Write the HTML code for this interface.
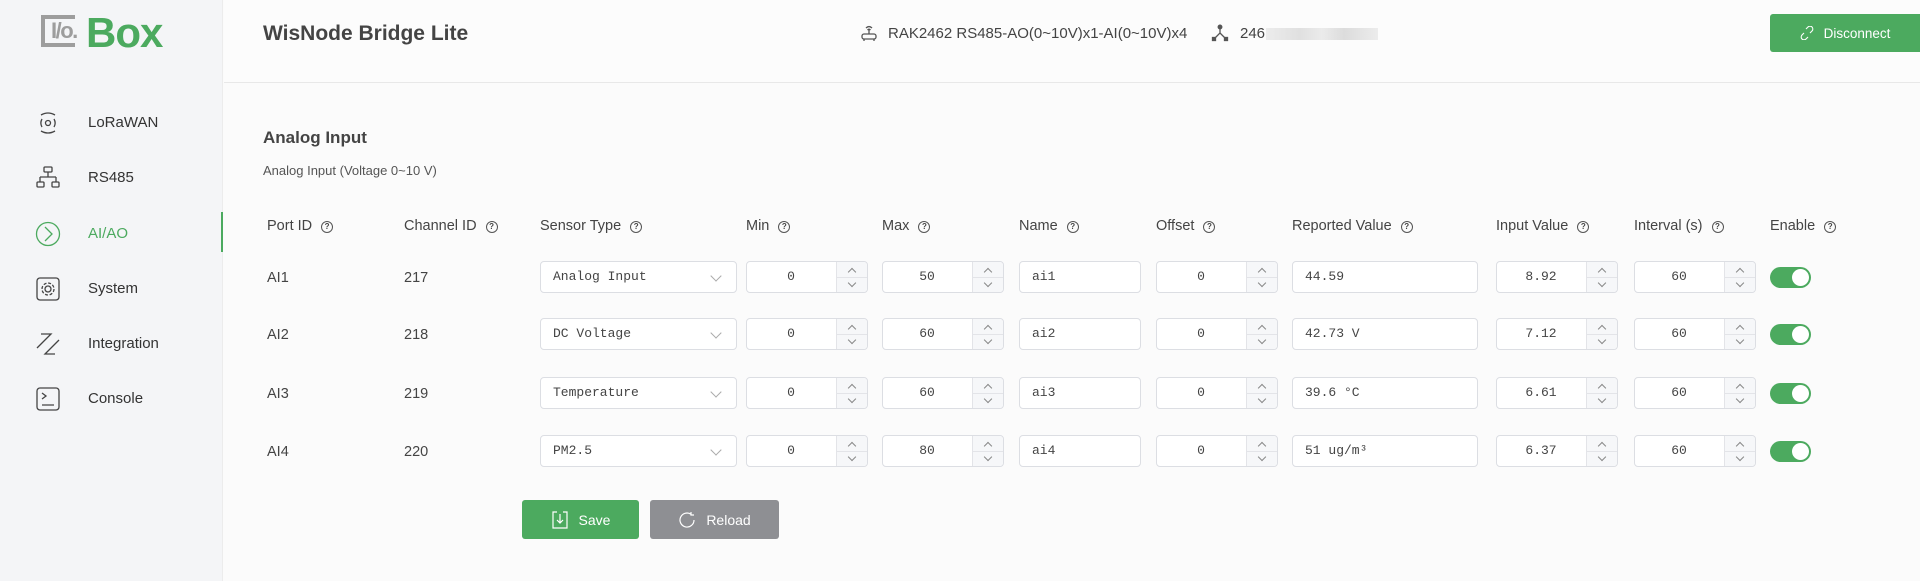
<!DOCTYPE html>
<html><head><meta charset="utf-8"><style>
*{box-sizing:border-box;margin:0;padding:0}
body{width:1920px;height:581px;overflow:hidden;background:#fbfbfb;font-family:"Liberation Sans",sans-serif;color:#333;position:relative}
.abs{position:absolute}
.side{left:0;top:0;width:223px;height:581px;background:#f4f5f7;border-right:1px solid #ececec}
.nav{position:absolute;left:0;width:223px;height:40px;display:flex;align-items:center;font-size:15px;color:#333}
.nav svg{position:absolute;left:35px;top:8px}
.nav span{position:absolute;left:88px;top:12px}
.hdr{left:224px;top:0;right:0;height:83px;background:#fcfcfc;border-bottom:1px solid #e8e8e8}
.th{position:absolute;top:218px;font-size:14.5px;color:#444;white-space:nowrap}
.q{display:inline-block;width:12px;height:12px;border:1.3px solid #555;border-radius:50%;font-size:8px;text-align:center;line-height:10px;margin-left:9px;vertical-align:1px;font-weight:bold}
.cell{position:absolute;font-size:14.5px;color:#444}
.box{position:absolute;height:32px;background:#fff;border:1px solid #dcdee3;border-radius:4px;font-family:"Liberation Mono",monospace;font-size:13px;color:#444;line-height:30px}
.num{text-align:center;padding-right:32px}
.step{position:absolute;right:0;top:0;width:31px;height:30px;border-left:1px solid #e3e4e8;background:#f6f7f9;border-radius:0 4px 4px 0}
.step:after{content:"";position:absolute;left:0;right:0;top:15px;border-top:1px solid #e3e4e8}
.step i{position:absolute;left:12px;width:6px;height:6px;border-left:1px solid #888;border-top:1px solid #888}
.sel{padding-left:12px}
.sel:after{content:"";position:absolute;right:16px;top:10px;width:7px;height:7px;border-right:1px solid #aaa;border-bottom:1px solid #aaa;transform:rotate(45deg)}
.txt{padding-left:12px}
.tg{position:absolute;left:1770px;width:41px;height:21px;border-radius:11px;background:#4caa5f}
.tg:after{content:"";position:absolute;right:2px;top:2px;width:17px;height:17px;border-radius:50%;background:#fff}
.btn{position:absolute;top:500px;height:39px;border-radius:3px;color:#fff;font-size:14px;display:flex;align-items:center;justify-content:center}
</style></head><body>
<div class="abs side"></div>
<!-- logo -->
<div class="abs" style="left:41px;top:15px;width:34px;height:32px;border:4px solid #9d9d9d;border-right:none"></div>
<div class="abs" style="left:51px;top:18px;font-size:22px;font-weight:bold;color:#9d9d9d;letter-spacing:-1.5px">I/o.</div>
<div class="abs" style="left:86px;top:9px;font-size:42px;font-weight:bold;color:#4caa5f;letter-spacing:-1px">Box</div>
<!-- nav -->
<div class="nav" style="top:102px"><svg width="26" height="26" viewBox="0 0 26 26" fill="none" stroke="#444" stroke-width="1.3"><circle cx="13" cy="13" r="2.5"/><path d="M7 9a8 8 0 0 0 0 8M19 9a8 8 0 0 1 0 8M6 5q7-4 14 0M6 21q7 4 14 0"/></svg><span>LoRaWAN</span></div>
<div class="nav" style="top:157px"><svg width="26" height="26" viewBox="0 0 26 26" fill="none" stroke="#444" stroke-width="1.3"><rect x="9" y="2" width="8" height="5" rx="1"/><path d="M13 7v5M5 12h16M5 12v5M21 12v5"/><rect x="2" y="17" width="7" height="5" rx="1"/><rect x="17" y="17" width="7" height="5" rx="1"/></svg><span>RS485</span></div>
<div class="nav" style="top:213px"><svg width="26" height="26" viewBox="0 0 26 26" fill="none" stroke="#4caa5f" stroke-width="1.3"><circle cx="13" cy="13" r="11.5"/><path d="M10 6l7 7-7 7"/></svg><span style="color:#4caa5f">AI/AO</span></div>
<div class="abs" style="left:221px;top:212px;width:2px;height:40px;background:#4caa5f"></div>
<div class="nav" style="top:268px"><svg width="26" height="26" viewBox="0 0 26 26" fill="none" stroke="#444" stroke-width="1.3"><rect x="2" y="2" width="22" height="22" rx="3"/><circle cx="13" cy="13" r="3"/><circle cx="13" cy="13" r="6" stroke-dasharray="3 1.7"/></svg><span>System</span></div>
<div class="nav" style="top:323px"><svg width="26" height="26" viewBox="0 0 26 26" fill="none" stroke="#444" stroke-width="1.3"><path d="M6 3h10L2 17M24 9L10 23h10"/></svg><span>Integration</span></div>
<div class="nav" style="top:378px"><svg width="26" height="26" viewBox="0 0 26 26" fill="none" stroke="#444" stroke-width="1.3"><rect x="2" y="2" width="22" height="22" rx="3"/><path d="M7 7l4 3-4 3M7 19h12"/></svg><span>Console</span></div>
<!-- header -->
<div class="abs hdr"></div>
<div class="abs" style="left:263px;top:22px;font-size:21px;font-weight:bold;color:#444">WisNode Bridge Lite</div>
<svg class="abs" style="left:860px;top:24px" width="18" height="18" viewBox="0 0 18 18" fill="none" stroke="#555" stroke-width="1.3"><path d="M6 4q3-3 6 0M7.5 6q1.5-1.5 3 0M9 6v4"/><rect x="2" y="10" width="14" height="5" rx="2"/><path d="M4 15v2M14 15v2"/></svg>
<div class="abs" style="left:888px;top:25px;font-size:15px;color:#444">RAK2462 RS485-AO(0~10V)x1-AI(0~10V)x4</div>
<svg class="abs" style="left:1211px;top:24px" width="18" height="18" viewBox="0 0 18 18" fill="#555" stroke="#555" stroke-width="1.3"><circle cx="9" cy="3" r="1.8"/><path d="M9 4v5l-6 6M9 9l6 6" fill="none"/><rect x="1.5" y="13.5" width="3" height="3"/><rect x="13.5" y="13.5" width="3" height="3"/></svg>
<div class="abs" style="left:1240px;top:25px;font-size:15px;color:#444">246</div>
<div class="abs" style="left:1266px;top:28px;width:112px;height:12px;background:linear-gradient(90deg,#ececec,#e0e0e0 30%,#ebebeb 50%,#dcdcdc 70%,#ececec)"></div>
<div class="abs" style="left:1770px;top:14px;width:150px;height:38px;background:#4caa5f;border-radius:3px 0 0 3px;color:#fff;font-size:13.5px;display:flex;align-items:center;justify-content:center"><svg width="14" height="14" viewBox="0 0 14 14" fill="none" stroke="#fff" stroke-width="1.1" style="margin-right:10px"><path d="M6 3l2-2a2.5 2.5 0 0 1 4 4L10 7M8 11l-2 2a2.5 2.5 0 0 1-4-4l2-2"/></svg>Disconnect</div>
<!-- content -->
<div class="abs" style="left:263px;top:128px;font-size:17px;font-weight:bold;color:#444">Analog Input</div>
<div class="abs" style="left:263px;top:163px;font-size:13px;color:#555">Analog Input (Voltage 0~10 V)</div>

<div class="th" style="left:267px">Port ID<span class="q">?</span></div>
<div class="th" style="left:404px">Channel ID<span class="q">?</span></div>
<div class="th" style="left:540px">Sensor Type<span class="q">?</span></div>
<div class="th" style="left:746px">Min<span class="q">?</span></div>
<div class="th" style="left:882px">Max<span class="q">?</span></div>
<div class="th" style="left:1019px">Name<span class="q">?</span></div>
<div class="th" style="left:1156px">Offset<span class="q">?</span></div>
<div class="th" style="left:1292px">Reported Value<span class="q">?</span></div>
<div class="th" style="left:1496px">Input Value<span class="q">?</span></div>
<div class="th" style="left:1634px">Interval (s)<span class="q">?</span></div>
<div class="th" style="left:1770px">Enable<span class="q">?</span></div>

<div id="rows"></div>
<script>
var d=[["AI1","217","Analog Input","0","50","ai1","0","44.59","8.92","60",261],
["AI2","218","DC Voltage","0","60","ai2","0","42.73 V","7.12","60",318],
["AI3","219","Temperature","0","60","ai3","0","39.6 °C","6.61","60",377],
["AI4","220","PM2.5","0","80","ai4","0","51 ug/m³","6.37","60",435]];
var st='<div class="step"><i style="top:7px;transform:rotate(45deg)"></i><i style="top:18px;transform:rotate(225deg)"></i></div>';
var h='';
d.forEach(function(r){var t=r[10];
h+='<div class="cell" style="left:267px;top:'+(t+9)+'px">'+r[0]+'</div>';
h+='<div class="cell" style="left:404px;top:'+(t+9)+'px">'+r[1]+'</div>';
h+='<div class="box sel" style="left:540px;top:'+t+'px;width:197px">'+r[2]+'</div>';
h+='<div class="box num" style="left:746px;top:'+t+'px;width:122px">'+r[3]+st+'</div>';
h+='<div class="box num" style="left:882px;top:'+t+'px;width:122px">'+r[4]+st+'</div>';
h+='<div class="box txt" style="left:1019px;top:'+t+'px;width:122px">'+r[5]+'</div>';
h+='<div class="box num" style="left:1156px;top:'+t+'px;width:122px">'+r[6]+st+'</div>';
h+='<div class="box txt" style="left:1292px;top:'+t+'px;width:186px">'+r[7]+'</div>';
h+='<div class="box num" style="left:1496px;top:'+t+'px;width:122px">'+r[8]+st+'</div>';
h+='<div class="box num" style="left:1634px;top:'+t+'px;width:122px">'+r[9]+st+'</div>';
h+='<div class="tg" style="top:'+(t+6)+'px"></div>';
});
document.getElementById('rows').innerHTML=h;
</script>
<div class="btn" style="left:522px;width:117px;background:#4caa5f"><svg width="18" height="18" viewBox="0 0 18 18" fill="none" stroke="#fff" stroke-width="1.2" style="margin-right:10px"><path d="M6 1H2v16h14V1h-4M9 3v9M6 9l3 3 3-3"/></svg>Save</div>
<div class="btn" style="left:650px;width:129px;background:#8e8f93"><svg width="18" height="18" viewBox="0 0 18 18" fill="none" stroke="#fff" stroke-width="1.2" style="margin-right:10px"><path d="M16 9a7 7 0 1 1-3-5.7M13 1v3h3"/></svg>Reload</div>
</body></html>
